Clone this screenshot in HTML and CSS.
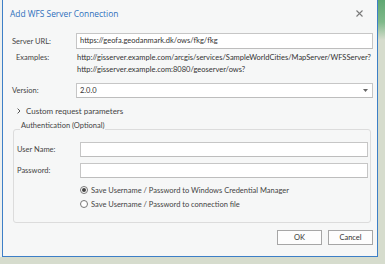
FILE: index.html
```html
<!DOCTYPE html>
<html>
<head>
<meta charset="utf-8">
<link rel="stylesheet" href="styles.css">
</head>
<body>
<div class="dialog">
  <div class="titlebar">
    <span class="title">Add WFS Server Connection</span>
    <svg class="close" width="7" height="7" viewBox="0 0 7 7"><path d="M0.5 0.5 L6.5 6.5 M6.5 0.5 L0.5 6.5" stroke="#7a7a7a" stroke-width="1.1"/></svg>
  </div>
  <div class="content">
    <div class="form">
      <span class="label">Server URL:</span>
      <div class="field url">https://geofa.geodanmark.dk/ows/fkg/fkg</div>
      <span class="label ex-label">Examples:</span>
      <div class="examples">
        <div>http://gisserver.example.com/arcgis/services/SampleWorldCities/MapServer/WFSServer?</div>
        <div>http://gisserver.example.com:8080/geoserver/ows?</div>
      </div>
      <span class="label">Version:</span>
      <div class="field select"><span>2.0.0</span><svg width="5" height="3" viewBox="0 0 5 3"><path d="M0 0 H5 L2.5 3 Z" fill="#666"/></svg></div>
    </div>
    <div class="expander">
      <svg width="4" height="6" viewBox="0 0 4 6"><path d="M0.6 0.6 L3 3 L0.6 5.4" stroke="#555" stroke-width="1" fill="none"/></svg>
      <span>Custom request parameters</span>
    </div>
    <fieldset class="group">
      <legend>Authentication (Optional)</legend>
      <div class="auth">
        <span class="label">User Name:</span>
        <div class="field"></div>
        <span class="label">Password:</span>
        <div class="field"></div>
      </div>
      <div class="radios">
        <div class="radio-row"><span class="radio checked"></span><span>Save Username / Password to Windows Credential Manager</span></div>
        <div class="radio-row"><span class="radio"></span><span>Save Username / Password to connection file</span></div>
      </div>
    </fieldset>
    <div class="buttons">
      <div class="btn">OK</div>
      <div class="btn">Cancel</div>
    </div>
  </div>
</div>
</body>
</html>
```
FILE: styles.css
```css
html, body {
  margin: 0;
  padding: 0;
}
body {
  width: 385px;
  height: 264px;
  overflow: hidden;
  background:
    linear-gradient(180deg, #5fa872 0, #7fb98a 22px, #d6dccd 40px, #d6dccd 100%);
  font-family: Lato, "Open Sans", sans-serif;
  font-size: 7.5px;
  color: #444;
}
.dialog {
  margin-left: 2px;
  width: 374px;
  height: 256px;
  border: 1px solid #3d7fc7;
  border-top: none;
  background: #f6f7f7;
  display: flex;
  flex-direction: column;
  box-shadow: -2px 0 0 #eef0ee;
}
.titlebar {
  height: 26px;
  display: flex;
  align-items: center;
  justify-content: space-between;
  padding: 0 14px 0 7px;
}
.title {
  font-size: 8.4px;
  color: #2e6fbc;
  font-family: "Open Sans", sans-serif;
}
.content {
  padding: 7px 4px 0 9px;
  display: flex;
  flex-direction: column;
}
.form {
  display: grid;
  grid-template-columns: 64px 297px;
  align-items: center;
}
.label {
  color: #444;
}
.field {
  box-sizing: border-box;
  height: 16px;
  background: #fff;
  border: 1px solid #c6c6c6;
  border-bottom-color: #bdbdbd;
  padding-left: 3px;
  line-height: 14px;
  color: #333;
}
.ex-label {
  align-self: start;
  padding-left: 4px;
  line-height: 12px;
  margin-top: 3px;
}
.examples {
  margin: 3px 0 7px 1px;
  line-height: 12px;
  color: #333;
  white-space: nowrap;
}
.select {
  height: 15px;
  line-height: 13px;
  display: flex;
  justify-content: space-between;
  align-items: center;
  padding-right: 4px;
}
.expander {
  display: flex;
  align-items: center;
  gap: 5px;
  padding-left: 5px;
  height: 14px;
  margin-top: 6px;
  font-size: 8px;
  color: #444;
}
.group {
  margin: 3px 2px 0 1px;
  padding: 5px 2px 11px 3px;
  border: 1px solid #dcdcdc;
  border-radius: 3px;
  min-width: 0;
}
.group legend {
  padding: 0 1px 6px;
  margin-left: 3px;
  line-height: 10px;
  color: #444;
}
.auth {
  display: grid;
  grid-template-columns: 63px 1fr;
  row-gap: 6px;
  align-items: center;
}
.auth .field {
  height: 15px;
}
.radios {
  margin: 5px 0 0 63px;
  display: flex;
  flex-direction: column;
}
.radio-row {
  display: flex;
  align-items: center;
  gap: 3px;
  height: 14px;
}
.radio {
  box-sizing: border-box;
  width: 8px;
  height: 8px;
  border: 1px solid #777;
  border-radius: 50%;
  background: #fff;
  display: flex;
  align-items: center;
  justify-content: center;
}
.radio.checked::after {
  content: "";
  width: 4px;
  height: 4px;
  border-radius: 50%;
  background: #444;
}
.buttons {
  display: flex;
  justify-content: flex-end;
  gap: 6px;
  margin-top: 7px;
}
.btn {
  box-sizing: border-box;
  width: 45px;
  height: 15px;
  border: 1px solid #a6a6a6;
  background: #fdfdfd;
  text-align: center;
  line-height: 13px;
  color: #333;
}
```
